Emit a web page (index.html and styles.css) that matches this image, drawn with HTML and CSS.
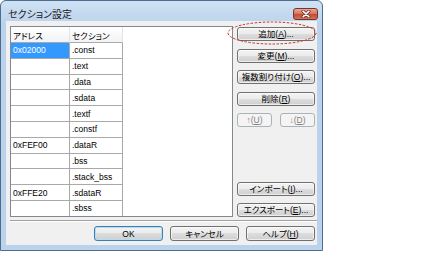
FILE: index.html
```html
<!DOCTYPE html>
<html lang="ja">
<head>
    <meta charset="UTF-8">
    <meta name="viewport" content="width=device-width, initial-scale=1.0">
    <title>セクション設定</title>
    <link rel="stylesheet" href="styles.css">
</head>
<body>
    <div class="window">
        <!-- Title bar -->
        <div class="titlebar">
            <span class="title">セクション設定</span>
            <span class="close-btn">
                <svg width="10" height="8" viewBox="0 0 10 8">
                    <path d="M2 1.2 L8 6.8 M8 1.2 L2 6.8" stroke="#5b2118" stroke-width="3" stroke-linecap="round"/>
                    <path d="M2 1.2 L8 6.8 M8 1.2 L2 6.8" stroke="#ffffff" stroke-width="1.6" stroke-linecap="round"/>
                </svg>
            </span>
        </div>

        <div class="client">
            <div class="main">
                <!-- Section list -->
                <div class="list">
                    <table class="sections">
                        <colgroup>
                            <col class="col-addr">
                            <col class="col-sec">
                        </colgroup>
                        <thead>
                            <tr>
                                <th>アドレス</th>
                                <th>セクション</th>
                            </tr>
                        </thead>
                        <tbody>
                            <tr><td class="selected">0x02000</td><td>.const</td></tr>
                            <tr><td></td><td>.text</td></tr>
                            <tr><td></td><td>.data</td></tr>
                            <tr><td></td><td>.sdata</td></tr>
                            <tr><td></td><td>.textf</td></tr>
                            <tr><td></td><td>.constf</td></tr>
                            <tr><td>0xFEF00</td><td>.dataR</td></tr>
                            <tr><td></td><td>.bss</td></tr>
                            <tr><td></td><td>.stack_bss</td></tr>
                            <tr><td>0xFFE20</td><td>.sdataR</td></tr>
                            <tr><td></td><td>.sbss</td></tr>
                        </tbody>
                    </table>
                </div>

                <!-- Side buttons -->
                <div class="side">
                    <button class="btn">追加(<u>A</u>)...</button>
                    <button class="btn">変更(<u>M</u>)...</button>
                    <button class="btn">複数割り付け(<u>O</u>)...</button>
                    <button class="btn">削除(<u>R</u>)</button>
                    <div class="arrows">
                        <button class="btn" disabled>↑(<u>U</u>)</button>
                        <button class="btn" disabled>↓(<u>D</u>)</button>
                    </div>
                    <button class="btn bottom-group">インポート(<u>I</u>)...</button>
                    <button class="btn">エクスポート(<u>E</u>)...</button>
                </div>
            </div>

            <div class="separator"></div>

            <div class="footer">
                <button class="btn default">OK</button>
                <button class="btn">キャンセル</button>
                <button class="btn">ヘルプ(<u>H</u>)</button>
            </div>
        </div>

        <!-- annotation around the add button -->
        <svg class="highlight" width="90" height="24" viewBox="0 0 90 24">
            <ellipse cx="45" cy="12" rx="44" ry="11" fill="none" stroke="#c4352b" stroke-width="1" stroke-dasharray="2.5 1.5"/>
        </svg>
    </div>
</body>
</html>
```

FILE: styles.css
```css
body {
    margin: 0;
    background: #fff;
    font-family: "Liberation Sans", "Noto Sans CJK JP", sans-serif;
    font-size: 8.5px;
    font-feature-settings: "palt";
    color: #000;
}

/* Window frame */
.window {
    position: relative;
    width: 323px;
    height: 251px;
    box-sizing: border-box;
    border: 1px solid #4f6d8c;
    border-radius: 6px 6px 0 0;
    background: linear-gradient(#d0e2f5, #bad2eb 24px);
    padding: 0 5px 5px;
    display: flex;
    flex-direction: column;
}

.titlebar {
    height: 20px;
    box-sizing: border-box;
    padding: 5px 0 0 2px;
    display: flex;
    align-items: center;
    justify-content: space-between;
}

.title {
    font-size: 10px;
    color: #1b1b1b;
}

.close-btn {
    width: 25px;
    height: 12px;
    box-sizing: border-box;
    margin-right: -1px;
    border: 1px solid #7a3328;
    border-radius: 3px;
    background: linear-gradient(#e9a99b, #d77662 45%, #c54a31 50%, #d0725a);
    display: flex;
    align-items: center;
    justify-content: center;
}

/* Client area */
.client {
    flex: 1;
    background: #f0f0f0;
    padding: 5px 2px 4px 4px;
    display: flex;
    flex-direction: column;
}

.main {
    display: flex;
    gap: 4px;
    height: 191px;
}

.list {
    width: 223px;
    box-sizing: border-box;
    border: 1px solid #828790;
    background: #fff;
    overflow: hidden;
}

.sections {
    border-collapse: separate;
    border-spacing: 0;
    table-layout: fixed;
    width: 112px;
}

.col-addr {
    width: 59px;
}

.col-sec {
    width: 53px;
}

.sections th,
.sections td {
    padding: 0 0 0 2px;
    text-align: left;
    font-weight: normal;
    white-space: nowrap;
    overflow: hidden;
    border-right: 1px solid #a9a9a9;
    border-bottom: 1px solid #a9a9a9;
}

.sections thead tr {
    height: 16px;
}

.sections th {
    background: linear-gradient(#ffffff, #f2f3f5);
    border-right-color: #e2e5ea;
}

.sections tbody tr {
    height: 15.8px;
}

.sections td.selected {
    background: #3399ff;
    color: #fff;
}

/* Buttons */
.btn {
    height: 14px;
    box-sizing: border-box;
    border: 1px solid #707070;
    border-radius: 3px;
    background: linear-gradient(#f3f3f3, #ebebeb 50%, #dddddd 50%, #cfcfcf);
    box-shadow: inset 0 0 0 1px rgba(255, 255, 255, 0.6);
    font: inherit;
    color: #000;
    padding: 0;
    line-height: 12px;
    white-space: nowrap;
}

.btn:disabled {
    border-color: #adb2b5;
    background: #f4f4f4;
    box-shadow: none;
    color: #838383;
}

.btn.default {
    border-color: #3c7fb1;
    box-shadow: inset 0 0 0 1px #b4dcf4;
}

.side {
    width: 78px;
    display: flex;
    flex-direction: column;
    gap: 7.5px;
    padding-top: 1px;
    box-sizing: border-box;
}

.arrows {
    display: flex;
    justify-content: space-between;
}

.arrows .btn {
    width: 35px;
}

.bottom-group {
    margin-top: auto;
}

.separator {
    border-top: 1px solid #a0a0a0;
    border-bottom: 1px solid #ffffff;
    margin: 3px -2px 0 0;
}

.footer {
    display: flex;
    justify-content: flex-end;
    gap: 7px;
    margin-top: 4px;
}

.footer .btn {
    width: 69px;
    height: 15px;
}

.highlight {
    position: absolute;
    left: 226px;
    top: 20px;
}
```
